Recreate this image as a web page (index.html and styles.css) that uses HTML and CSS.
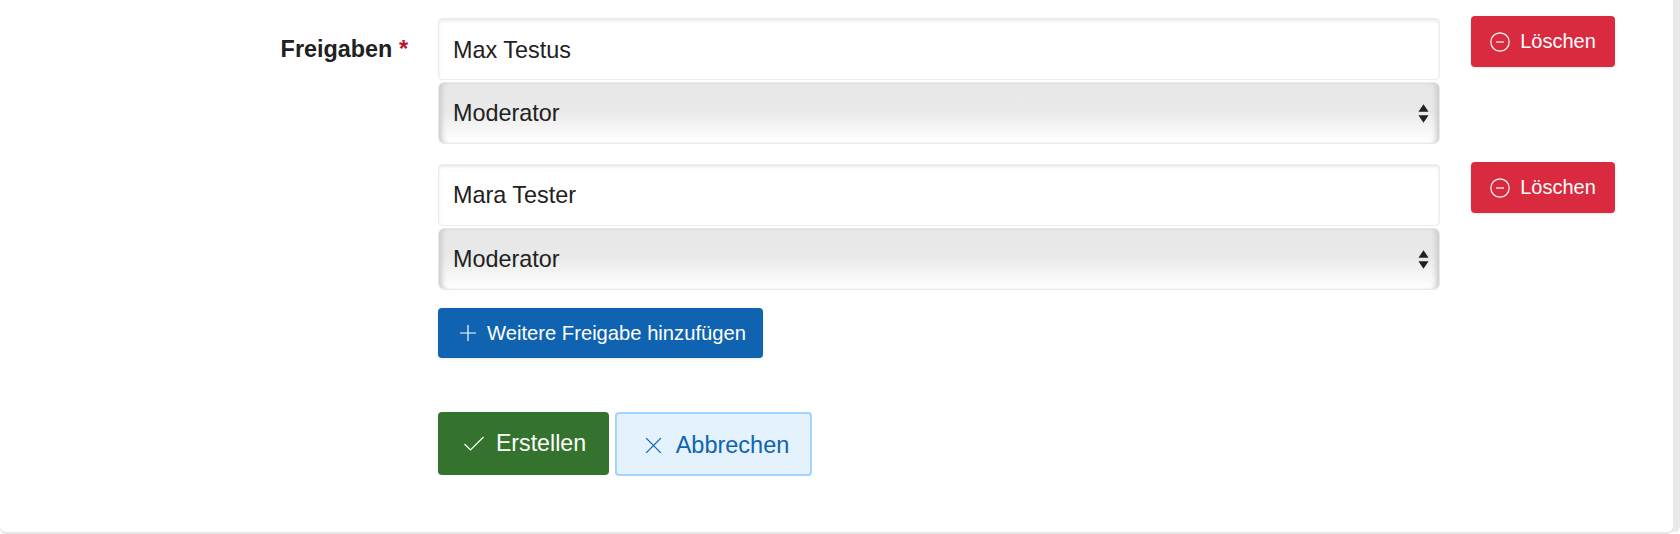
FILE: index.html
```html
<!DOCTYPE html>
<html lang="de">
<head>
    <meta charset="UTF-8">
    <meta name="viewport" content="width=device-width, initial-scale=1.0">
    <title>Freigaben</title>
    <link rel="stylesheet" href="styles.css">
</head>
<body>
    <div class="panel">
        <div class="form-row">
            <div class="label">Freigaben <span class="required">*</span></div>
            <div class="fields">
                <div class="share">
                    <div class="share-inputs">
                        <div class="input input-first">Max Testus</div>
                        <div class="select">Moderator
                            <svg class="arrows" viewBox="0 0 12 22"><path d="M6 1l5.500 8H.5zM6 21L.5 13h11z"/></svg>
                        </div>
                    </div>
                    <button class="btn btn-danger">
                        <svg class="icon" viewBox="0 0 20 20"><circle cx="10" cy="10" r="9.2"/><path d="M6 10h8"/></svg>
                        Löschen
                    </button>
                </div>
                <div class="share">
                    <div class="share-inputs">
                        <div class="input">Mara Tester</div>
                        <div class="select">Moderator
                            <svg class="arrows" viewBox="0 0 12 22"><path d="M6 1l5.500 8H.5zM6 21L.5 13h11z"/></svg>
                        </div>
                    </div>
                    <button class="btn btn-danger">
                        <svg class="icon" viewBox="0 0 20 20"><circle cx="10" cy="10" r="9.2"/><path d="M6 10h8"/></svg>
                        Löschen
                    </button>
                </div>
                <button class="btn btn-add">
                    <svg class="icon" viewBox="0 0 20 20"><path d="M10 2v16M2 10h16"/></svg>
                    Weitere Freigabe hinzufügen
                </button>
                <div class="actions">
                    <button class="btn btn-save">
                        <svg class="icon" viewBox="0 0 20 20"><path d="M.5 10l6 6 13-13"/></svg>
                        Erstellen
                    </button>
                    <button class="btn btn-cancel">
                        <svg class="icon icon-x" viewBox="0 0 20 20"><path d="M3 3l14 14M17 3L3 17"/></svg>
                        Abbrechen
                    </button>
                </div>
            </div>
        </div>
    </div>
</body>
</html>
```

FILE: styles.css
```css
html, body {
    height: 100%;
}
body {
    margin: 0;
    font-family: "Liberation Sans", Arial, sans-serif;
    color: #212121;
    background-color: #fff;
}
.panel {
    box-sizing: border-box;
    width: 1673px;
    height: 532px;
    background-color: #fff;
    border-radius: 0 0 6px 6px;
    box-shadow: 0 2px 0 #e6e6e6, 7px 0 0 #e9e9e9;
    padding-top: 16px;
}
.form-row {
    display: flex;
}
.label {
    width: 408px;
    padding-top: 19px;
    text-align: right;
    font-size: 23.4px;
    font-weight: bold;
    line-height: 28px;
}
.required {
    color: #b9132f;
}
.fields {
    margin-left: 30px;
    width: 1177px;
}
.share {
    display: flex;
    align-items: flex-start;
    justify-content: space-between;
    margin-bottom: 18px;
}
.share-inputs {
    width: 1002px;
    padding-top: 2px;
}
.input, .select {
    box-sizing: border-box;
    height: 62px;
    padding-left: 14px;
    font-size: 23.4px;
    line-height: 60px;
    border: 1px solid #ececec;
    border-radius: 4px;
}
.input {
    background-color: #fff;
    box-shadow: inset 0 2px 3px #e9e9e9;
    margin-bottom: 2px;
}
.input-first {
    line-height: 62px;
}
.select {
    position: relative;
    background: linear-gradient(#e7e7e7 0%, #e9e9e9 45%, #fff 100%);
    box-shadow: inset 6px 0 5px -3px #cccccc, inset -6px 0 5px -3px #cccccc;
    border-color: #e8e8e8;
    border-radius: 6px;
}
.arrows {
    position: absolute;
    right: 10px;
    top: 20px;
    width: 11px;
    height: 21px;
    fill: #212121;
}
.btn {
    display: flex;
    align-items: center;
    justify-content: center;
    box-sizing: border-box;
    border: none;
    border-radius: 4px;
    color: #fff;
    font-family: inherit;
    font-size: 20px;
    padding: 0;
}
.icon {
    width: 20px;
    height: 20px;
    margin-right: 10px;
    fill: none;
    stroke: currentColor;
    stroke-width: 1.2;
}
.icon-x {
    width: 21px;
    height: 21px;
    margin-right: 12px;
}
.btn-danger {
    width: 144px;
    height: 51px;
    background-color: #d92a40;
    box-shadow: 0 1px 3px rgba(0,0,0,0.1);
}
.btn-add {
    width: 325px;
    height: 50px;
    padding-left: 3px;
    font-size: 20.2px;
    background-color: #0f63b0;
    box-shadow: 0 1px 3px rgba(0,0,0,0.1);
}
.btn-add .icon {
    margin-right: 9px;
}
.actions {
    display: flex;
    gap: 6px;
    margin-top: 54px;
}
.btn-save {
    width: 171px;
    height: 63px;
    padding-left: 3px;
    font-size: 23.2px;
    background-color: #33732e;
}
.btn-save .icon {
    margin-right: 12px;
}
.btn-cancel {
    width: 197px;
    height: 64px;
    padding: 2px 0 0 5px;
    font-size: 23.5px;
    color: #0f63b0;
    background-color: #e3f2fd;
    border: 2px solid #a3d4ff;
}
```
